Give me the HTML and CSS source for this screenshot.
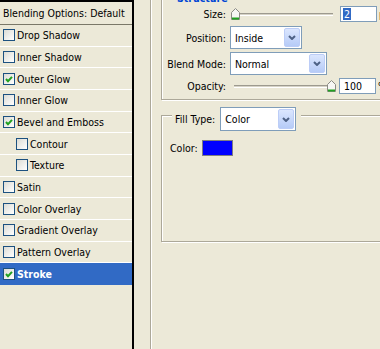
FILE: index.html
```html
<!DOCTYPE html>
<html lang="en">
<head>
  <meta charset="UTF-8" />
  <title>Layer Style - Stroke</title>
  <link rel="stylesheet" href="styles.css">
</head>
<body>
  <div class="window">
    <div class="styles">
      <div class="styles-head">Blending Options: Default</div>
      <ul class="styles-list">
        <li class="style-item"><span class="check"></span>Drop Shadow</li>
        <li class="style-item"><span class="check"></span>Inner Shadow</li>
        <li class="style-item"><span class="check on"><svg viewBox="0 0 10 10" width="10" height="10"><path d="M2 5 L4 7.2 L8 2.8" /></svg></span>Outer Glow</li>
        <li class="style-item"><span class="check"></span>Inner Glow</li>
        <li class="style-item"><span class="check on"><svg viewBox="0 0 10 10" width="10" height="10"><path d="M2 5 L4 7.2 L8 2.8" /></svg></span>Bevel and Emboss</li>
        <li class="style-item sub"><span class="check"></span>Contour</li>
        <li class="style-item sub"><span class="check"></span>Texture</li>
        <li class="style-item"><span class="check"></span>Satin</li>
        <li class="style-item"><span class="check"></span>Color Overlay</li>
        <li class="style-item"><span class="check"></span>Gradient Overlay</li>
        <li class="style-item"><span class="check"></span>Pattern Overlay</li>
        <li class="style-item selected"><span class="check on"><svg viewBox="0 0 10 10" width="10" height="10"><path d="M2 5 L4 7.2 L8 2.8" /></svg></span>Stroke</li>
      </ul>
    </div>

    <div class="options">
      <div class="group structure">
        <div class="group-title">Structure</div>
        <div class="form">
          <span class="label">Size:</span>
          <div class="slider-field">
            <div class="slider size-slider">
              <div class="track"></div>
              <svg class="thumb" style="left: 1px" viewBox="0 0 9 12" width="9" height="12"><path class="thumb-body" d="M0.5 4.5 L4.5 0.5 L8.5 4.5 L8.5 11.5 L0.5 11.5 Z" /><path class="thumb-foot" d="M1 10.5 H8" /></svg>
            </div>
            <div class="field size-field"><span class="sel">2</span></div>
            <span class="unit">px</span>
          </div>

          <span class="label">Position:</span>
          <div class="select w-position">
            <span>Inside</span>
            <div class="select-btn"><svg viewBox="0 0 8 5" width="8" height="5"><path d="M1 1 L4 4 L7 1" /></svg></div>
          </div>

          <span class="label">Blend Mode:</span>
          <div class="select w-blend">
            <span>Normal</span>
            <div class="select-btn"><svg viewBox="0 0 8 5" width="8" height="5"><path d="M1 1 L4 4 L7 1" /></svg></div>
          </div>

          <span class="label">Opacity:</span>
          <div class="slider-field">
            <div class="slider opacity-slider">
              <div class="track"></div>
              <svg class="thumb" style="left: 97px" viewBox="0 0 9 12" width="9" height="12"><path class="thumb-body" d="M0.5 4.5 L4.5 0.5 L8.5 4.5 L8.5 11.5 L0.5 11.5 Z" /><path class="thumb-foot" d="M1 10.5 H8" /></svg>
            </div>
            <div class="field opacity-field">100</div>
            <span class="unit">%</span>
          </div>
        </div>
      </div>

      <div class="group fill">
        <div class="group-title">
          <span>Fill Type:</span>
          <div class="select w-fill">
            <span>Color</span>
            <div class="select-btn"><svg viewBox="0 0 8 5" width="8" height="5"><path d="M1 1 L4 4 L7 1" /></svg></div>
          </div>
        </div>
        <div class="color-row">
          <span>Color:</span>
          <span class="swatch"></span>
        </div>
      </div>
    </div>
  </div>
</body>
</html>
```

FILE: styles.css
```css
/* RESET & BASE */
* { box-sizing: border-box; margin: 0; padding: 0; }
body {
  background: #ece9d8;
  color: #000;
  font: 10.5px "DejaVu Sans Condensed", "Liberation Sans", sans-serif;
  overflow: hidden;
}

.window {
  display: flex;
  width: 380px;
  height: 349px;
  overflow: hidden;
}

/* STYLE LIST */
.styles {
  flex: none;
  width: 134px;
  border-top: 2px solid #000;
  border-right: 2px solid #000;
}
.styles-head {
  height: 23px;
  line-height: 22px;
  padding-left: 3px;
  border-bottom: 1px solid #7a7868;
  white-space: nowrap;
}
.styles-list {
  list-style: none;
  display: grid;
  grid-template-rows: repeat(12, 1fr);
  height: 260px;
}
.style-item {
  display: flex;
  align-items: center;
  gap: 2px;
  padding-left: 3px;
  border-bottom: 1px solid #fff;
  white-space: nowrap;
}
.style-item:last-child { border-bottom: 0; }
.style-item.sub { padding-left: 16px; }
.style-item.selected {
  background: #316ac5;
  color: #fff;
  font-weight: bold;
}

.check {
  flex: none;
  display: flex;
  align-items: center;
  justify-content: center;
  width: 12px;
  height: 12px;
  border: 1px solid #1c5180;
  background: linear-gradient(135deg, #dcdcd5, #fff);
}
.check svg path {
  fill: none;
  stroke: #21a121;
  stroke-width: 2;
}

/* OPTIONS PANEL */
.options {
  flex: 1;
  min-width: 0;
  margin-left: 16px;
  padding-left: 10px;
  border-left: 1px solid #aca899;
  box-shadow: inset 1px 0 #fff;
}

.group {
  margin-right: -30px;
  border: 1px solid #aca899;
  box-shadow: inset 1px 1px #fff, 1px 1px #fff;
}
.group-title {
  display: flex;
  align-items: center;
  width: max-content;
  background: #ece9d8;
}

.structure {
  margin-top: -8px;
  padding-bottom: 5px;
}
.structure .group-title {
  height: 14px;
  margin: -2px 0 0 12px;
  padding: 0 3px;
  font-weight: bold;
  color: #0046d5;
}

.form {
  display: grid;
  grid-template-columns: 64px auto;
  grid-template-rows: 18px 23px 23px 16px;
  gap: 3px 4px;
  align-items: center;
  justify-items: start;
}
.form .label {
  justify-self: end;
  white-space: nowrap;
}

/* sliders */
.slider-field {
  display: flex;
  align-items: center;
  height: 16px;
}
.slider {
  position: relative;
  display: flex;
  align-items: center;
  height: 12px;
  padding: 0 2px 0 4px;
}
.size-slider { width: 105px; }
.opacity-slider { width: 104px; }
.track {
  flex: 1;
  height: 3px;
  border-top: 1px solid #9d9a8f;
  border-bottom: 1px solid #fff;
  background: #d6d3c6;
}
.thumb {
  position: absolute;
  top: 0;
}
.thumb-body {
  fill: #f7f7f4;
  stroke: #8a8a84;
}
.thumb-foot {
  fill: none;
  stroke: #21a121;
  stroke-width: 2;
}

.field {
  flex: none;
  width: 37px;
  height: 16px;
  margin-left: 5px;
  padding-left: 3px;
  line-height: 14px;
  border: 1px solid #7f9db9;
  background: #fff;
}
.size-field { padding: 1px 0 0 2px; line-height: 12px; }
.size-field .sel {
  display: inline-block;
  width: 8px;
  height: 12px;
  text-align: center;
  background: #316ac5;
  color: #fff;
}
.opacity-field { padding-left: 4px; }
.unit { margin-left: 2px; }

/* dropdowns */
.select {
  display: flex;
  align-items: stretch;
  height: 23px;
  padding: 1px;
  border: 1px solid #7f9db9;
  background: #fff;
}
.select span {
  flex: 1;
  display: flex;
  align-items: center;
  padding-left: 3px;
}
.select-btn {
  flex: none;
  display: flex;
  align-items: center;
  justify-content: center;
  width: 16px;
  border: 1px solid #bccdf7;
  border-radius: 2px;
  background: linear-gradient(#dbe6fe, #b6cbf7);
}
.select-btn path {
  fill: none;
  stroke: #4d6185;
  stroke-width: 2;
}
.w-position { width: 72px; }
.w-blend { width: 97px; }
.w-fill { width: 76px; height: 24px; }

/* fill group */
.fill {
  height: 127px;
  margin-top: 15px;
}
.fill .group-title {
  gap: 5px;
  height: 24px;
  margin: -9px 0 0 10px;
  padding: 0 5px 0 3px;
}
.color-row {
  display: flex;
  align-items: center;
  gap: 4px;
  height: 16px;
  margin: 9px 0 0 8px;
}
.swatch {
  width: 31px;
  height: 16px;
  border: 1px solid #808080;
  background: #0000ff;
}
```
